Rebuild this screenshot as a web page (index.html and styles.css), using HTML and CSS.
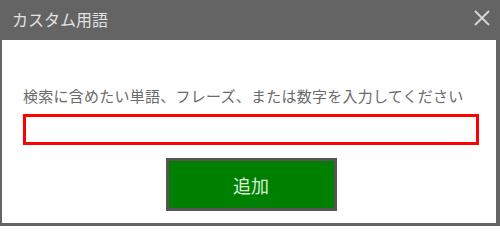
FILE: index.html
```html
<!DOCTYPE html>
<html lang="ja">
<head>
<meta charset="utf-8">
<link rel="stylesheet" href="styles.css">
</head>
<body>
<div class="dialog">
  <div class="header">
    <span class="title">カスタム用語</span>
    <svg class="close" width="16" height="16" viewBox="0 0 16 16"><path d="M1 1 L15 15 M15 1 L1 15" stroke="#d8d8d8" stroke-width="1.8" fill="none"/></svg>
  </div>
  <div class="body">
    <div class="label">検索に含めたい単語、フレーズ、または数字を入力してください</div>
    <input class="field" type="text">
    <div class="actions"><button class="add">追加</button></div>
  </div>
</div>
</body>
</html>
```
FILE: styles.css
```css
html, body { margin: 0; padding: 0; background: #fff; }
body { font-family: "Noto Sans CJK JP", "Noto Sans", sans-serif; }
.dialog { width: 500px; height: 226px; display: flex; flex-direction: column; }
.header { height: 40px; background: #646464; display: flex; align-items: center; justify-content: space-between; padding: 0 10px 0 12px; box-sizing: border-box; }
.title { color: #e2e2e2; font-size: 16px; line-height: 20px; margin-top: -2px; }
.close { display: block; margin-top: -4px; }
.body { flex: 1; border-left: 2px solid #646464; border-right: 4px solid #646464; border-bottom: 3px solid #646464; padding: 46px 17px 0 21px; display: flex; flex-direction: column; }
.label { color: #6a6a6a; font-size: 15px; line-height: 20px; white-space: nowrap; letter-spacing: 0.25px; }
.field { margin: 8px 0 0; height: 31px; box-sizing: border-box; border: 3px solid #ff0000; outline: none; padding: 0 6px; width: 100%; }
.actions { display: flex; justify-content: center; margin-top: 13px; }
.add { width: 171px; height: 53px; box-sizing: border-box; background: #008000; border: 3px solid #555; color: #d9f0d9; font-family: "Noto Sans CJK JP", sans-serif; font-size: 18px; padding: 0; }
```
